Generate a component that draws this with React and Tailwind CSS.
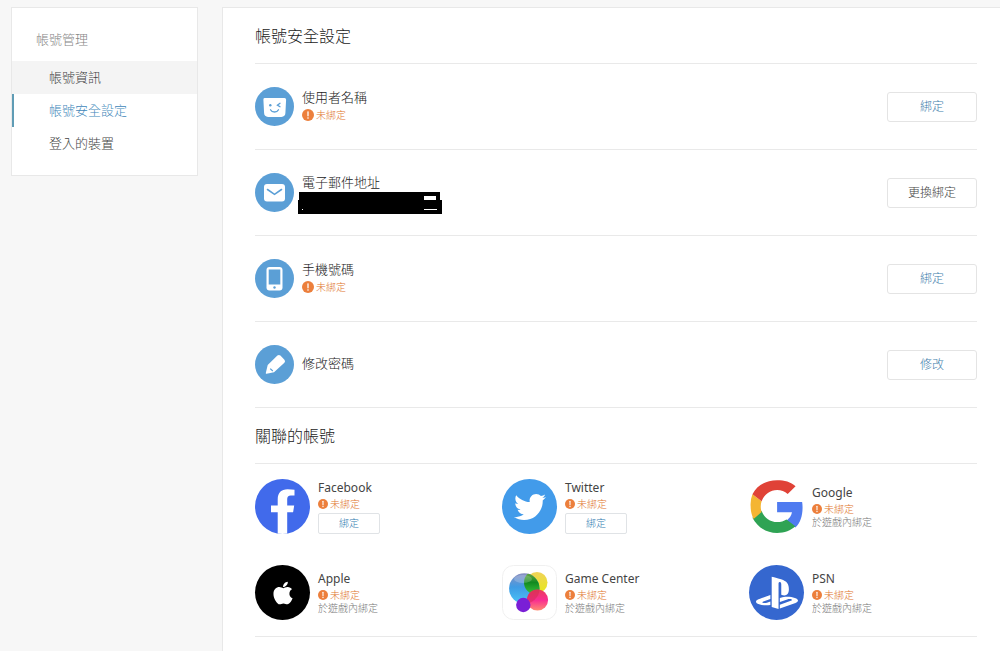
import { FaApple, FaPlaystation, FaTwitter } from "react-icons/fa";

const menu = [
  { text: "帳號資訊", state: "hover" },
  { text: "帳號安全設定", state: "active" },
  { text: "登入的裝置", state: "" },
];

const FaceIcon = () => (
  <svg viewBox="0 0 39 39" className="size-[39px] shrink-0">
    <circle cx="19.5" cy="19.5" r="19.5" fill="#5b9fd6" />
    <path
      d="M9.5 11h20a1.6 1.6 0 0 1 1.6 1.7l-.7 13.4a4 4 0 0 1-4 3.8H13.1a4 4 0 0 1-4-3.8l-.7-13.4A1.6 1.6 0 0 1 9.5 11z"
      fill="#fff"
    />
    <circle cx="15.3" cy="18.3" r="1.2" fill="#5b9fd6" />
    <path
      d="M25 16.3l-2.6 1.8 2.6 1.6M15.5 22.8c1.6 2.9 6.4 2.9 8 0"
      fill="none"
      stroke="#5b9fd6"
      strokeWidth="1.3"
      strokeLinecap="round"
    />
  </svg>
);

const MailIcon = () => (
  <svg viewBox="0 0 39 39" className="size-[39px] shrink-0">
    <circle cx="19.5" cy="19.5" r="19.5" fill="#5b9fd6" />
    <rect x="9" y="11" width="21" height="17.5" rx="3" fill="#fff" />
    <path
      d="M12.5 16.5l7 4.8 7-4.8"
      fill="none"
      stroke="#5b9fd6"
      strokeWidth="1.6"
      strokeLinecap="round"
    />
  </svg>
);

const PhoneIcon = () => (
  <svg viewBox="0 0 39 39" className="size-[39px] shrink-0">
    <circle cx="19.5" cy="19.5" r="19.5" fill="#5b9fd6" />
    <rect x="11.5" y="8" width="16" height="23.5" rx="3" fill="#fff" />
    <rect x="13.7" y="10.5" width="11.6" height="15" fill="#5b9fd6" />
    <circle cx="19.5" cy="28.5" r="1.2" fill="#5b9fd6" />
  </svg>
);

const PencilIcon = () => (
  <svg viewBox="0 0 39 39" className="size-[39px] shrink-0">
    <circle cx="19.5" cy="19.5" r="19.5" fill="#5b9fd6" />
    <path
      d="M10.8 27.9l1.9-8L22.4 10.6a2.2 2.2 0 0 1 3 0l4 4.1a2.2 2.2 0 0 1 0 3L19 27.2l-7.4 1.6a.8.8 0 0 1-.8-.9z"
      fill="#fff"
    />
    <path d="M15.2 23.6l2.6 2.4" stroke="#5b9fd6" strokeWidth="1.2" />
  </svg>
);

const FacebookLogo = () => (
  <svg viewBox="0 0 55 55" className="size-[55px] shrink-0">
    <clipPath id="fb">
      <circle cx="27.5" cy="27.5" r="27.5" />
    </clipPath>
    <g clipPath="url(#fb)">
      <rect width="55" height="55" fill="#416aeb" />
      <path
        d="M22.7 55V33.3H16v-6.8h6.7V20.5c0-6.7 3.6-10.2 9.8-10.2 2.7 0 5 .2 7 .5v5.7h-3.7c-2.6 0-3.6 1.4-3.6 3.7v6.3h7l-1.1 6.8h-5.9V55z"
        fill="#fff"
      />
    </g>
  </svg>
);

const TwitterLogo = () => (
  <span className="flex size-[55px] shrink-0 items-center justify-center rounded-full bg-[#429bea]">
    <FaTwitter className="size-8 text-white" />
  </span>
);

const AppleLogo = () => (
  <span className="flex size-[55px] shrink-0 items-center justify-center rounded-full bg-black">
    <FaApple className="size-[26px] text-white" />
  </span>
);

const PsnLogo = () => (
  <span className="flex size-[55px] shrink-0 items-center justify-center rounded-full bg-[#3567cf]">
    <FaPlaystation className="size-[42px] text-white" />
  </span>
);

const GoogleLogo = () => (
  <svg viewBox="0 0 55 55" className="size-[55px] shrink-0">
    <g transform="translate(.5 0) scale(1.15)">
      <path
        fill="#4f7bf0"
        d="M46.14 24.55c0-1.57-.15-3.09-.38-4.55H24v9.02h12.94c-.58 2.96-2.26 5.48-4.78 7.18l7.73 6c4.51-4.18 6.25-10.36 6.25-17.65z"
      />
      <path
        fill="#2fa354"
        d="M24 47c6.48 0 11.93-2.13 15.89-5.81l-7.73-6c-2.15 1.45-4.92 2.3-8.16 2.3-6.26 0-11.57-4.22-13.47-9.91l-7.98 6.19C6.51 41.62 14.62 47 24 47z"
      />
      <path
        fill="#f4b532"
        d="M10.53 28.59A14.5 14.5 0 0 1 9.77 24c0-1.6.27-3.14.76-4.59l-7.98-6.19A23.9 23.9 0 0 0 1 24c0 3.87.92 7.53 2.56 10.78z"
      />
      <path
        fill="#e04237"
        d="M24 9.5c3.54 0 6.71 1.22 9.21 3.6l6.85-6.85C35.9 2.38 30.47 1 24 1 14.62 1 6.51 5.38 2.56 13.22l7.98 6.19C12.43 13.72 17.74 9.5 24 9.5z"
      />
    </g>
  </svg>
);

const GameCenterLogo = () => (
  <svg viewBox="0 0 55 55" className="size-[55px] shrink-0">
    <defs>
      <linearGradient id="blue" x1="0" y1="0" x2="0" y2="1">
        <stop offset="0" stopColor="#8a8fc0" />
        <stop offset=".45" stopColor="#3f9be4" />
        <stop offset="1" stopColor="#4cc4f7" />
      </linearGradient>
      <linearGradient id="yellow" x1="0" y1="0" x2="0" y2="1">
        <stop offset="0" stopColor="#f0d35a" />
        <stop offset="1" stopColor="#e6e81c" />
      </linearGradient>
      <linearGradient id="green" x1="0" y1="0" x2="0" y2="1">
        <stop offset="0" stopColor="#7fae4a" />
        <stop offset=".5" stopColor="#128a20" />
        <stop offset="1" stopColor="#3cc43c" />
      </linearGradient>
      <linearGradient id="pink" x1="0" y1="0" x2="0" y2="1">
        <stop offset="0" stopColor="#e83c5a" />
        <stop offset=".5" stopColor="#f92c92" />
        <stop offset="1" stopColor="#ff8a70" />
      </linearGradient>
      <clipPath id="blueClip">
        <circle cx="22.3" cy="23.5" r="15.2" />
      </clipPath>
      <clipPath id="pinkClip">
        <circle cx="35.5" cy="35" r="10.6" />
      </clipPath>
    </defs>
    <rect x=".5" y=".5" width="54" height="54" rx="11" fill="#fff" stroke="#f0f0f0" />
    <circle cx="35" cy="17.5" r="10.5" fill="url(#yellow)" />
    <circle cx="22.3" cy="23.5" r="15.2" fill="url(#blue)" />
    <circle cx="34" cy="17.5" r="12" fill="url(#green)" clipPath="url(#blueClip)" />
    <circle cx="35.5" cy="35" r="10.6" fill="url(#pink)" />
    <circle cx="22.3" cy="23.5" r="15.2" fill="#d32a50" opacity=".5" clipPath="url(#pinkClip)" />
    <circle cx="21.3" cy="40" r="7.2" fill="#7a1fd6" />
    <ellipse cx="21" cy="14" rx="9" ry="4" fill="#fff" opacity=".2" />
  </svg>
);

const WarnIcon = ({ className }) => (
  <svg viewBox="0 0 12 12" className={className}>
    <circle cx="6" cy="6" r="6" fill="#ec7f3c" />
    <path d="M6 2.8v4" stroke="#fff" strokeWidth="1.3" strokeLinecap="round" />
    <circle cx="6" cy="9" r=".8" fill="#fff" />
  </svg>
);

// blacked out e-mail address
const HiddenMail = () => (
  <svg viewBox="0 0 144 22" className="-mb-1 -ml-1 h-[22px] w-36">
    <path d="M1 0h141v8h2v14H0V8h1z" fill="#000" />
    <path d="M126 4h12v4h-12zM126 17h13v1h-13zM4 17h1v1H4z" fill="#fff" />
  </svg>
);

const settings = [
  { name: "使用者名稱", Icon: FaceIcon, unbound: true, action: "綁定", color: "text-[#3f80ad]" },
  { name: "電子郵件地址", Icon: MailIcon, hidden: true, action: "更換綁定", color: "text-[#444]" },
  { name: "手機號碼", Icon: PhoneIcon, unbound: true, action: "綁定", color: "text-[#3f80ad]" },
  { name: "修改密碼", Icon: PencilIcon, action: "修改", color: "text-[#3f80ad]" },
];

const linked = [
  { name: "Facebook", Logo: FacebookLogo, canBind: true },
  { name: "Twitter", Logo: TwitterLogo, canBind: true },
  { name: "Google", Logo: GoogleLogo },
  { name: "Apple", Logo: AppleLogo },
  { name: "Game Center", Logo: GameCenterLogo },
  { name: "PSN", Logo: PsnLogo },
];

function Sidebar() {
  return (
    <aside className="w-[187px] shrink-0 self-start border border-[#e8e8e8] bg-white pb-[15px]">
      <h2 className="px-6 pt-[21px] pb-3 text-[13px] leading-5 text-[#858585]">帳號管理</h2>
      <nav>
        {menu.map(({ text, state }) => (
          <a
            key={text}
            href="#"
            className={`block border-l-2 py-[6px] pl-[35px] text-[13px] leading-[21px] ${
              state === "active"
                ? "border-[#5f9cb5] text-[#3f88ba]"
                : state === "hover"
                ? "border-[#f4f4f4] bg-[#f4f4f4] text-[#444]"
                : "border-white text-[#444]"
            }`}
          >
            {text}
          </a>
        ))}
      </nav>
    </aside>
  );
}

function SettingRow({ name, Icon, unbound, hidden, action, color }) {
  return (
    <li className="flex min-h-[86px] items-center border-b border-[#e9e9e9]">
      <Icon />
      <div className="ml-2 flex-1 pb-[3px]">
        <h3 className="text-[13px] leading-5 text-[#222]">{name}</h3>
        {unbound && (
          <p className="flex items-center gap-[2px] text-[10px] leading-4 text-[#e0731f]">
            <WarnIcon className="size-[12px]" />
            未綁定
          </p>
        )}
        {hidden && <HiddenMail />}
      </div>
      <button
        className={`h-[30px] w-[90px] rounded-[3px] border border-[#e4e4e4] bg-white text-xs ${color}`}
      >
        {action}
      </button>
    </li>
  );
}

function LinkedAccount({ name, Logo, canBind }) {
  return (
    <li className="flex h-[55px] items-center gap-2">
      <Logo />
      <div>
        <h3 className="text-xs leading-4 font-normal text-[#444]">{name}</h3>
        <p className="flex items-center gap-[2px] text-[10px] leading-4 text-[#e0731f]">
          <WarnIcon className="size-[10px]" />
          未綁定
        </p>
        {canBind ? (
          <button className="mt-px block h-[21px] w-[62px] rounded-xs border border-[#e0e3e6] bg-white text-[10px] leading-4 text-[#2f7bb0]">
            綁定
          </button>
        ) : (
          <p className="text-[10px] leading-[11px] text-[#777]">於遊戲內綁定</p>
        )}
      </div>
    </li>
  );
}

export default function App() {
  return (
    <div className="flex min-h-screen gap-6 bg-[#f7f7f7] pt-[7px] pl-[11px] font-['Noto_Sans','Noto_Sans_CJK_TC',sans-serif] font-light">
      <Sidebar />
      <main className="flex-1 border-t border-l border-[#e8e8e8] bg-white pr-[23px] pl-8">
        <h1 className="border-b border-[#e9e9e9] pt-4 pb-[15px] text-base leading-6 text-[#222]">
          帳號安全設定
        </h1>
        <ul>
          {settings.map((item) => (
            <SettingRow key={item.name} {...item} />
          ))}
        </ul>
        <h2 className="border-b border-[#e9e9e9] pt-4 pb-[15px] text-base leading-6 text-[#222]">
          關聯的帳號
        </h2>
        <ul className="grid grid-cols-3 gap-x-[19px] gap-y-[31px] border-b border-[#e9e9e9] pt-[15px] pb-4">
          {linked.map((item) => (
            <LinkedAccount key={item.name} {...item} />
          ))}
        </ul>
      </main>
    </div>
  );
}
